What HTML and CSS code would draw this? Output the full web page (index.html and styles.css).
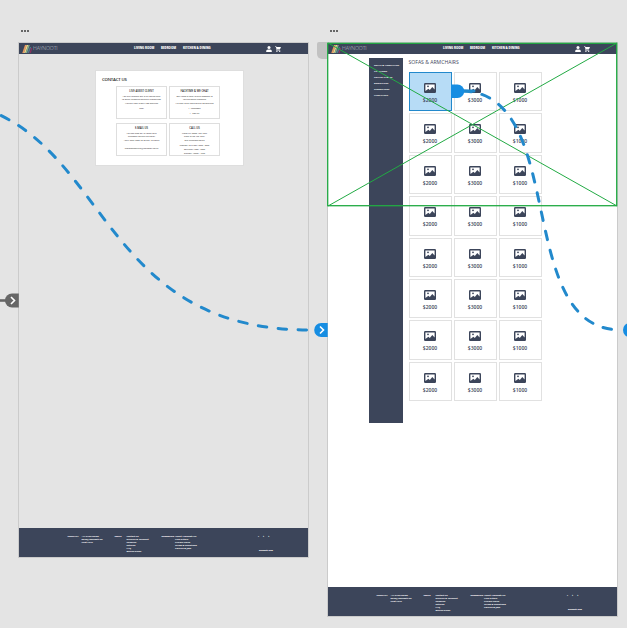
FILE: index.html
```html
<!DOCTYPE html>
<html lang="en">
<head>
<meta charset="utf-8">
<title>Prototype canvas</title>
<link rel="stylesheet" href="styles.css">
</head>
<body>
<svg class="defs" aria-hidden="true">
  <symbol id="logo" viewBox="0 0 11 8">
    <path d="M3 0h1.800L2 8H.3z" fill="#e89a62"/><path d="M4.700 0h1.600L3.500 8H2z" fill="#f0d58a"/><path d="M6.300 0h1.500L5 8H3.500z" fill="#83b08a"/><path d="M7.800 2h1.400L7 8H5.200z" fill="#56778d"/><path d="M9.200 3h1.200L8.800 8H7.400z" fill="#8d315f"/>
  </symbol>
  <symbol id="user" viewBox="0 0 6 6"><circle cx="3" cy="1.6" r="1.5"/><path d="M.2 6V4.800Q.4 3.700 3 3.600q2.600.1 2.800 1.200V6z"/></symbol>
  <symbol id="cart" viewBox="0 0 6 6"><path d="M0 .2h1.100l.4.7H6L4.900 3.400H2.200l-.3.6H5.300v.6H1.100l.5-1.400L.7.8H0z"/><circle cx="1.9" cy="5.4" r=".6"/><circle cx="4.7" cy="5.4" r=".6"/></symbol>
  <symbol id="picture" viewBox="0 0 12 10"><rect width="12" height="10" rx="1.2"/><path fill="#fff" d="M1.400 1.400h9.200v5L8.300 4 5.800 7 4.400 5.700 1.400 8z"/><circle cx="4" cy="3.3" r=".9"/></symbol>
</svg>

<main class="canvas">
  <div class="more more-left"><i></i><i></i><i></i></div>
  <div class="more more-right"><i></i><i></i><i></i></div>
  <div class="tab"></div>

  <section class="board contact">
    <header class="top">
      <svg class="logo"><use href="#logo"/></svg><span class="brand">HAYNOOTI</span>
      <nav><b class="n1">LIVING ROOM</b><b class="n2">BEDROOM</b><b class="n3">KITCHEN &amp; DINING</b></nav>
      <svg class="ico"><use href="#user"/></svg><svg class="ico"><use href="#cart"/></svg>
    </header>
    <div class="panel">
      <h1>CONTACT US</h1>
      <div class="options">
        <article><h2>LIVE ASSIST CLIENT</h2><p>You are through our 24hr online chat<br>to query products and our guarantees</p><p>Waiting time is only two minutes</p><p>Chat</p></article>
        <article><h2>FACETIME &amp; WE CHAT</h2><p>Our team is here to give answers to<br>you on social channels</p><p>We aim to get back within 30 minutes</p><p class="social">f &nbsp; Facebook</p><p class="social">t &nbsp; Twitter</p></article>
        <article><h2>E-MAIL US</h2><p>You can also get in touch with<br>customer service via email</p><p>You’ll hear from us within 48 hours</p><p class="mail">customerservice@haynooti.co.uk</p></article>
        <article><h2>CALL US</h2><p>From UK: 0800 123 4567<br>Tues: 0123 456 7891</p><p>Our business hours</p><p>Monday to Friday: 8am - 8pm<br>Saturday: 9am - 6pm</p><p>Sunday: 10am - 4pm</p></article>
      </div>
    </div>
    <footer class="bottom">
      <b class="f1">CONTACT US</b><p class="f2">+44 0123456789<br>sales@haynooti.uk<br>Chat Here</p>
      <b class="f3">SERVICE</b><p class="f4">Contact Us<br>Delivery &amp; Payment<br>Shipping<br>Returns<br>FAQ<br>Buying Guide</p>
      <b class="f5">INFORMATION</b><p class="f6">About Haynooti UK<br>Find a Store<br>Privacy Policy<br>Terms &amp; Conditions<br>Careers &amp; Jobs</p>
      <div class="follow"><span class="soc"><i>f</i><i>t</i><i>t</i></span><b>Haynooti 2020</b></div>
    </footer>
  </section>

  <section class="board shop">
    <header class="top">
      <svg class="logo"><use href="#logo"/></svg><span class="brand">HAYNOOTI</span>
      <nav><b class="n1">LIVING ROOM</b><b class="n2">BEDROOM</b><b class="n3">KITCHEN &amp; DINING</b></nav>
      <svg class="ico"><use href="#user"/></svg><svg class="ico"><use href="#cart"/></svg>
    </header>
    <div class="content">
      <aside><b>SOFAS &amp; ARMCHAIRS</b><b>TV STANDS</b><b>COFFEE TABLES</b><b>BOOKCASES</b><b>SIDEBOARDS</b><b>FIREPLACES</b></aside>
      <div class="listing"><h1>SOFAS &amp; ARMCHAIRS</h1><div class="grid" id="grid"></div></div>
    </div>
    <footer class="bottom">
      <b class="f1">CONTACT US</b><p class="f2">+44 0123456789<br>sales@haynooti.uk<br>Chat Here</p>
      <b class="f3">SERVICE</b><p class="f4">Contact Us<br>Delivery &amp; Payment<br>Shipping<br>Returns<br>FAQ<br>Buying Guide</p>
      <b class="f5">INFORMATION</b><p class="f6">About Haynooti UK<br>Find a Store<br>Privacy Policy<br>Terms &amp; Conditions<br>Careers &amp; Jobs</p>
      <div class="follow"><span class="soc"><i>f</i><i>t</i><i>t</i></span><b>Haynooti 2020</b></div>
    </footer>
  </section>

  <svg class="wires" viewBox="0 0 627 628" width="627" height="628">
    <g fill="none" stroke="#22aa44"><rect x="327.7" y="43.3" width="289" height="162.4" stroke-width="1.3"/><path d="M328 43L617 206M328 206L617 43" stroke-width="1"/></g>
    <g fill="none" stroke="#2289cc" stroke-width="3" stroke-linecap="round">
      <path d="M0 115C110 168 114 332 314 330" stroke-dasharray="8.6 11.4" stroke-dashoffset="18.6"/>
      <path d="M461 91C570 91 512 330 621 330" stroke-dasharray="8.6 11" stroke-dashoffset="18"/>
      <path d="M461 91h13"/>
    </g>
    <path d="M451 84.500h6.500a6.700 6.700 0 0 1 0 13.400H451z" fill="#168de2"/>
    <path d="M327.700 323h-6.500a7 7 0 0 0 0 14h6.500z" fill="#168de2"/>
    <path d="M630 323h-.5a6.500 7 0 0 0 0 14h.5z" fill="#168de2"/>
    <path d="M0 300.500h8" stroke="#666" stroke-width="2.600"/>
    <path d="M18.800 293.500H12a7 7 0 0 0 0 14h6.800z" fill="#666"/>
    <path d="M11 297l3.500 3.500-3.500 3.500M320 326.500l3.500 3.500-3.500 3.500" fill="none" stroke="#fff" stroke-width="1.600"/>
  </svg>
</main>
<script src="grid.js"></script>
</body>
</html>
```
FILE: styles.css
```css
* { box-sizing: border-box; margin: 0; padding: 0; }
body { width: 627px; height: 628px; overflow: hidden; background: #e4e4e4; font-family: "Open Sans", "Noto Sans", sans-serif; color: #3c455a; }
svg { display: block; }
.defs { position: absolute; width: 0; height: 0; }
.canvas { position: relative; width: 627px; height: 628px; overflow: hidden; }
.more { position: absolute; top: 30px; display: flex; gap: 1px; }
.more-left { left: 21px; }
.more-right { left: 330px; }
.more i { width: 2px; height: 2px; background: #666; }
.tab { position: absolute; left: 317px; top: 42px; width: 11px; height: 17px; border-radius: 2px 0 0 5px; background: #c2c2c2; }
.board { position: absolute; top: 43px; width: 289px; display: flex; flex-direction: column; outline: 1px solid #cbcbcb; }
.contact { left: 19px; height: 514px; background: #e4e4e4; }
.shop { left: 328px; height: 573px; background: #fff; }

.top { height: 11px; flex: none; display: flex; align-items: center; padding: 0 27px 0 3px; background: #3c455a; color: #fff; fill: #fff; }
.logo { width: 11px; height: 8px; }
.brand { width: 101px; font: 300 5.200px/11px "Open Sans"; color: #c4c9d2; letter-spacing: -.1px; }
nav { flex: 1; display: flex; font-size: 2.900px; line-height: 11px; white-space: nowrap; }
nav b { font-weight: 800; }
.n1 { width: 27px; }
.n2 { width: 22px; }
.ico { width: 6px; height: 6px; margin-left: 3px; }

.panel { width: 149px; height: 96px; margin: 16px 0 0 75.500px; padding: 5px 24px 0 20.500px; background: #fff; border: 1px solid #dedede; }
.panel h1 { margin-left: -14px; font: 600 4.300px/7px "Open Sans"; color: #222; letter-spacing: -.2px; white-space: nowrap; }
.options { display: grid; grid-template-columns: 51px 51px; grid-auto-rows: 33px; gap: 4px 2px; margin-top: 3px; }
article { border: 1px solid #dedede; padding-top: 1.500px; text-align: center; font-size: 2.200px; line-height: 3.200px; color: #222; white-space: nowrap; }
article h2 { font: 600 2.700px/4px "Open Sans"; margin-bottom: 2.500px; }
article p { margin-bottom: 1px; }
article p:nth-of-type(2) { margin-bottom: 1.700px; }
article .mail { margin-top: 4px; }

.bottom { height: 29px; flex: none; margin-top: auto; display: flex; padding-top: 7px; background: #3c455a; color: #fff; font-size: 2.350px; line-height: 3px; white-space: nowrap; font-weight: 700; }
.bottom > b { font-size: 1.700px; }
.bottom > p { font-size: 2.250px; }
.f1 { width: 14px; margin-left: 48.500px; }
.f2 { width: 33px; }
.f3 { width: 12px; }
.f4 { width: 35px; }
.f5 { width: 13.500px; }
.f6 { width: 83px; }
.follow { display: flex; flex-direction: column; gap: 11px; }
.soc { display: flex; gap: 4.200px; }
.soc i { font-style: normal; }
.bottom .follow b { font-size: 1.900px; margin-left: 1px; }

.content { display: flex; padding: 4px 0 0 41px; }
aside { width: 34px; height: 365px; padding: 4px 0 0 5px; background: #3c455a; color: #fff; display: flex; flex-direction: column; font-size: 2.450px; line-height: 6.100px; white-space: nowrap; }
.listing { padding-left: 5.500px; }
.listing h1 { font: 400 5.100px/8px "Open Sans"; height: 14px; white-space: nowrap; }
.grid { display: grid; grid-template-columns: repeat(3, 43px); grid-auto-rows: 39.400px; gap: 2px; }
.card { display: flex; flex-direction: column; align-items: center; padding-top: 10px; border: 1px solid #e1e1e1; background: #fff; font: 600 5px/7px "Open Sans"; }
.card svg { width: 12px; height: 10px; margin-bottom: 4px; fill: #3c455a; }
.card.selected { background: #b7dcf6; border-color: #2289cc; }
.wires { position: absolute; left: 0; top: 0; }
```
FILE: grid.js
```js
const prices = ["$2000", "$3000", "$1000"];
const grid = document.getElementById("grid");
for (let i = 0; i < 24; i++) {
  const card = document.createElement("div");
  card.className = i === 0 ? "card selected" : "card";
  card.innerHTML = `<svg viewBox="0 0 12 10"><use href="#picture"/></svg><span>${prices[i % 3]}</span>`;
  grid.append(card);
}
```
